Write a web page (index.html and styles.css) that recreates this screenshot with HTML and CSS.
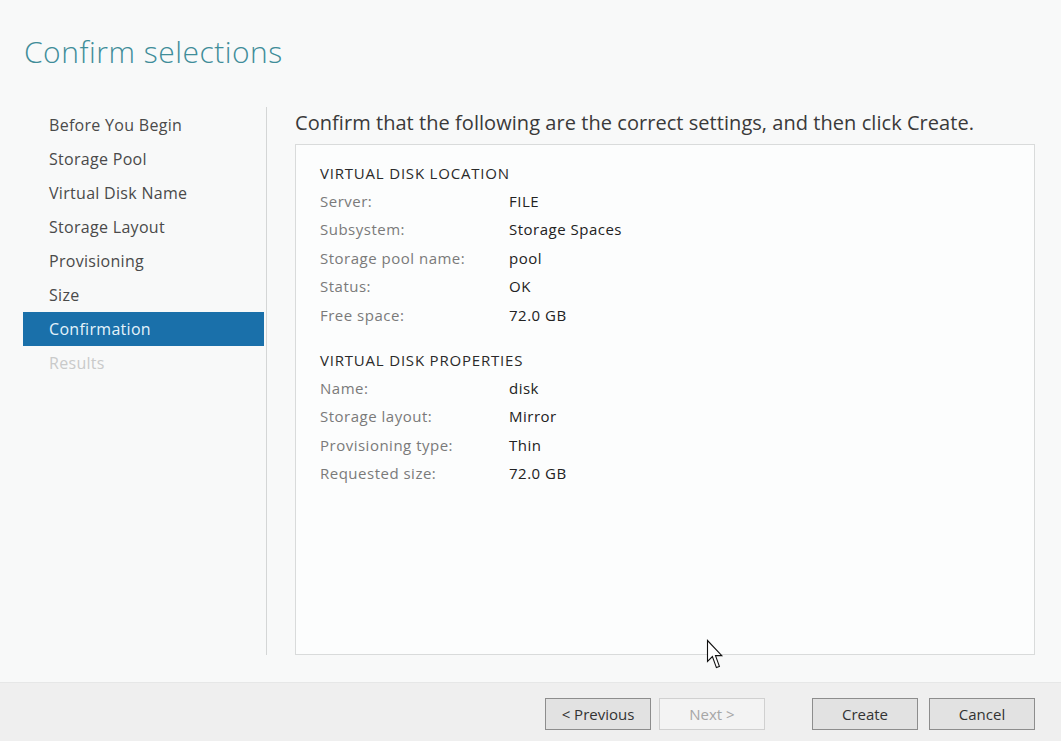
FILE: index.html
```html
<!DOCTYPE html>
<html>
<head>
<meta charset="utf-8">
<link rel="stylesheet" href="styles.css">
</head>
<body>
<div class="window">
  <div class="main">
    <h1 class="title">Confirm selections</h1>
    <div class="content">
      <div class="steps-wrap">
        <ul class="steps">
          <li class="step">Before You Begin</li>
          <li class="step">Storage Pool</li>
          <li class="step">Virtual Disk Name</li>
          <li class="step">Storage Layout</li>
          <li class="step">Provisioning</li>
          <li class="step">Size</li>
          <li class="step active">Confirmation</li>
          <li class="step disabled">Results</li>
        </ul>
      </div>
      <section class="pane">
        <p class="lead">Confirm that the following are the correct settings, and then click Create.</p>
        <div class="box">
          <div class="group">
            <div class="group-title">VIRTUAL DISK LOCATION</div>
            <div class="row"><span class="label">Server:</span><span class="value">FILE</span></div>
            <div class="row"><span class="label">Subsystem:</span><span class="value">Storage Spaces</span></div>
            <div class="row"><span class="label">Storage pool name:</span><span class="value">pool</span></div>
            <div class="row"><span class="label">Status:</span><span class="value">OK</span></div>
            <div class="row"><span class="label">Free space:</span><span class="value">72.0 GB</span></div>
          </div>
          <div class="group">
            <div class="group-title">VIRTUAL DISK PROPERTIES</div>
            <div class="row"><span class="label">Name:</span><span class="value">disk</span></div>
            <div class="row"><span class="label">Storage layout:</span><span class="value">Mirror</span></div>
            <div class="row"><span class="label">Provisioning type:</span><span class="value">Thin</span></div>
            <div class="row"><span class="label">Requested size:</span><span class="value">72.0 GB</span></div>
          </div>
        </div>
      </section>
    </div>
  </div>
  <footer class="footer">
    <button class="btn">&lt; Previous</button>
    <button class="btn btn-disabled">Next &gt;</button>
    <button class="btn btn-create">Create</button>
    <button class="btn btn-cancel">Cancel</button>
  </footer>
  <svg class="cursor" width="18" height="31" viewBox="0 0 18 31">
    <path d="M1.5 1.5 L1.5 22.5 L6.4 17.6 L10.4 28.6 L13.4 27.4 L9.5 16.6 L15.8 16.6 Z" fill="#ffffff" stroke="#111111" stroke-width="1.1" stroke-linejoin="miter"/>
  </svg>
</div>
</body>
</html>
```

FILE: styles.css
```css
html, body {
  margin: 0;
  padding: 0;
}
body {
  background: #f8f9f9;
  font-family: "Open Sans", "Noto Sans", "Liberation Sans", sans-serif;
  color: #333;
}
.window {
  position: relative;
  width: 1061px;
  height: 741px;
  display: flex;
  flex-direction: column;
  overflow: hidden;
}
.main {
  height: 682px;
  box-sizing: border-box;
  padding: 33px 26px 27px 23px;
  display: flex;
  flex-direction: column;
}
.title {
  margin: 0 0 0 1px;
  font-size: 30px;
  font-weight: 300;
  line-height: 38px;
  color: #3f8d99;
  letter-spacing: 0.5px;
}
.content {
  flex: 1;
  margin-top: 36px;
  display: flex;
  min-height: 0;
}
.steps-wrap {
  width: 241px;
  padding-right: 2px;
  border-right: 1px solid #d4d6d6;
}
.steps {
  list-style: none;
  margin: 0;
  padding: 1px 0 0 0;
}
.step {
  height: 34px;
  line-height: 34px;
  padding-left: 26px;
  font-size: 16px;
  letter-spacing: 0.3px;
  color: #4a4a4a;
}
.step.active {
  background: #1a70aa;
  color: #e4f3fb;
}
.step.disabled {
  color: #c9caca;
}
.pane {
  flex: 1;
  padding-left: 28px;
  display: flex;
  flex-direction: column;
}
.lead {
  margin: 0 0 5px 0;
  font-size: 20px;
  line-height: 32px;
  color: #3a3a3a;
  letter-spacing: 0.05px;
}
.box {
  flex: 1;
  border: 1px solid #d9dbdb;
  background: #fcfdfd;
  padding: 14px 0 0 24px;
}
.group + .group {
  margin-top: 17px;
}
.group-title {
  font-size: 15px;
  line-height: 28px;
  letter-spacing: 0.8px;
  color: #2a2a2a;
}
.row {
  display: flex;
  font-size: 15px;
  line-height: 28.4px;
  letter-spacing: 0.5px;
}
.label {
  width: 189px;
  color: #7a7a7a;
}
.value {
  color: #222;
}
.footer {
  flex: 1;
  background: #efefef;
  border-top: 1px solid #e6e7e7;
  display: flex;
  align-items: flex-start;
  padding: 15px 26px 0 0;
  justify-content: flex-end;
}
.btn {
  width: 106px;
  height: 32px;
  box-sizing: border-box;
  border: 1px solid #8d8d8d;
  background: #e2e2e2;
  font-family: "Open Sans", "Noto Sans", "Liberation Sans", sans-serif;
  font-size: 15px;
  color: #333;
  padding: 0;
  margin-left: 8px;
}
.btn-disabled {
  border-color: #d0d0d0;
  background: #f3f3f3;
  color: #a6a6a6;
}
.btn-create {
  margin-left: 47px;
}
.btn-cancel {
  margin-left: 11px;
}
.cursor {
  position: absolute;
  left: 706px;
  top: 639px;
}
```
